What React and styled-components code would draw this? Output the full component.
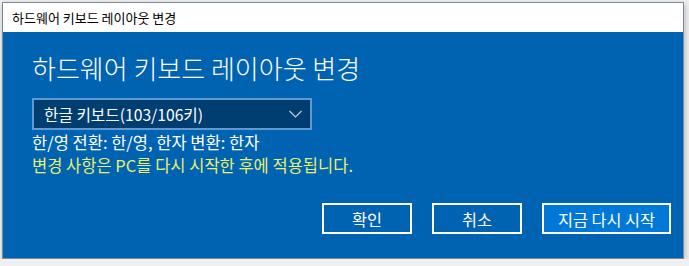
import React from 'react';
import styled, { createGlobalStyle } from 'styled-components';

const GlobalStyle = createGlobalStyle`
  html, body {
    margin: 0;
    padding: 0;
    background: #f0f0f0;
  }
  body {
    font-family: "Noto Sans CJK KR", "Noto Sans", sans-serif;
  }
`;

const Page = styled.div`
  padding: 2px 0 0 2px;
`;

const Window = styled.div`
  width: 682px;
  height: 257px;
  box-sizing: border-box;
  border: 1px solid #7d8a97;
  box-shadow: 1px 2px 6px rgba(0, 0, 0, 0.25);
  display: flex;
  flex-direction: column;
  background: #0063b1;
`;

const TitleBar = styled.div`
  height: 29px;
  flex: none;
  background: #ffffff;
  color: #000000;
  font-size: 13px;
  line-height: 29px;
  padding-left: 9px;
`;

const Body = styled.div`
  flex: 1;
  display: flex;
  flex-direction: column;
  padding: 18px 12px 0 29px;
  color: #ffffff;
`;

const Heading = styled.h1`
  margin: 0;
  font-size: 26px;
  font-weight: 300;
  line-height: 36px;
`;

const Select = styled.div`
  margin-top: 12px;
  width: 280px;
  height: 32px;
  box-sizing: border-box;
  border: 2px solid #5f9bd2;
  background: #003d70;
  display: flex;
  align-items: center;
  justify-content: space-between;
  padding: 0 8px 0 10px;
  font-size: 15.7px;
`;

const Chevron = () => (
  <svg width="13" height="8" viewBox="0 0 13 8">
    <path d="M0.5 1 L6.5 7 L12.5 1" fill="none" stroke="#b9d3ea" strokeWidth="1.2" />
  </svg>
);

const Info = styled.div`
  font-size: 16.5px;
  line-height: 22px;
  margin-top: 1px;
  white-space: nowrap;
  color: ${p => (p.warn ? '#e9f06c' : '#ffffff')};
`;

const Buttons = styled.div`
  margin-top: auto;
  margin-bottom: 24px;
  display: flex;
  justify-content: flex-end;
  gap: 20px;
`;

const Button = styled.button`
  width: ${p => p.w || 90}px;
  height: 31px;
  box-sizing: border-box;
  border: 2px solid #ffffff;
  background: ${p => (p.primary ? '#0078d7' : 'transparent')};
  color: #ffffff;
  font-family: inherit;
  font-size: 16.3px;
  padding: 0;
`;

export default function App() {
  return (
    <Page>
      <GlobalStyle />
      <Window>
        <TitleBar>하드웨어 키보드 레이아웃 변경</TitleBar>
        <Body>
          <Heading>하드웨어 키보드 레이아웃 변경</Heading>
          <Select>
            <span>한글 키보드(103/106키)</span>
            <Chevron />
          </Select>
          <Info>한/영 전환: 한/영, 한자 변환: 한자</Info>
          <Info warn>변경 사항은 PC를 다시 시작한 후에 적용됩니다.</Info>
          <Buttons>
            <Button>확인</Button>
            <Button>취소</Button>
            <Button primary w={129}>지금 다시 시작</Button>
          </Buttons>
        </Body>
      </Window>
    </Page>
  );
}
